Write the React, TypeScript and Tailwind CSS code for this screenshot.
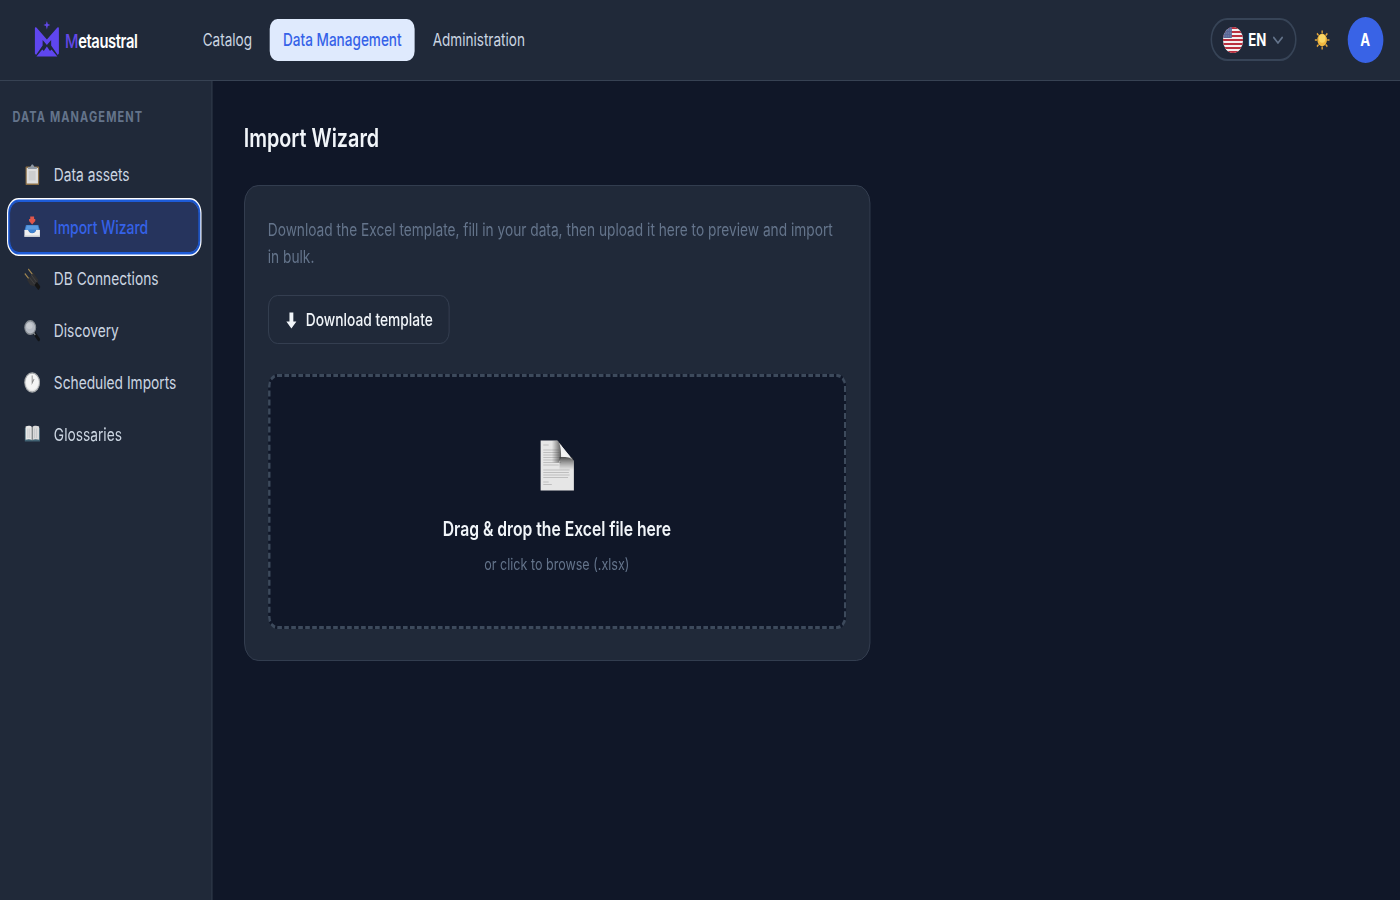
import React, { useState } from 'react';

interface NavItem {
  id: string;
  label: string;
  icon: React.ReactNode;
}

const topNav = ['Catalog', 'Data Management', 'Administration'];

const sideItems: NavItem[] = [
  {
    id: 'assets',
    label: 'Data assets',
    icon: (
      <svg width="21" height="22" viewBox="0 0 21 22">
        <rect x="2" y="2.5" width="17.5" height="18.500" rx="1" fill="#8d7047" />
        <rect x="3.5" y="4" width="14.5" height="15.500" fill="#dedede" />
        <rect x="6" y="7" width="9" height="9.500" fill="#cccdce" />
        <path d="M5 3h3l2-2.5h1.5l2 2.5h3v2H5z" fill="#8f98a3" />
      </svg>
    ),
  },
  {
    id: 'import',
    label: 'Import Wizard',
    icon: (
      <svg width="21" height="22" viewBox="0 0 21 22">
        <path d="M2.5 9h16l2 5.5H.5z" fill="#3b7cc9" />
        <path d="M3.5 9.5h14l1.5 4.5H2z" fill="#5b9be0" />
        <path d="M.5 14h5c1 4 9 4 10 0h5v6.500H.5z" fill="#efefef" />
        <path d="M.5 19.5h20V21H.5z" fill="#c9ccd0" />
        <path d="M5.500 13.500c1 5 9 5 10 0z" fill="#3f82cf" />
        <path d="M8 .5h5V3h1.500v2l-4 3.500-4-3.500V3H8z" fill="#e0564b" />
      </svg>
    ),
  },
  {
    id: 'db',
    label: 'DB Connections',
    icon: (
      <svg width="21" height="22" viewBox="0 0 21 22">
        <path d="M1 5.5l6 6M5.5 1l6 6" stroke="#a08650" strokeWidth="1.4" />
        <path d="M4 12l8-7 6 6.500-.500 5-3.500 2-6-1.500z" fill="#303032" />
        <path d="M7 9.500l7 7M9.500 7l6.500 7" stroke="#4a4a4a" strokeWidth=".8" />
        <path d="M15 15.500l5 5" stroke="#151515" strokeWidth="4.500" />
      </svg>
    ),
  },
  {
    id: 'discovery',
    label: 'Discovery',
    icon: (
      <svg width="21" height="22" viewBox="0 0 21 22">
        <path d="M13.5 13.500l5.500 6" stroke="#111418" strokeWidth="3.4" strokeLinecap="round" />
        <path d="M11.5 12l3 3" stroke="#83888e" strokeWidth="1.6" />
        <ellipse cx="8" cy="7.500" rx="7" ry="6.800" fill="#b5bac3" stroke="#858b91" strokeWidth="1.4" />
        <ellipse cx="7" cy="6" rx="4" ry="3" fill="#c6cad0" />
      </svg>
    ),
  },
  {
    id: 'scheduled',
    label: 'Scheduled Imports',
    icon: (
      <svg width="21" height="22" viewBox="0 0 21 22">
        <circle cx="10.5" cy="10.500" r="9.6" fill="#e4e4e4" stroke="#a4a7aa" strokeWidth="1.2" />
        <circle cx="10.5" cy="10" r="8" fill="#f4f4f4" />
        <path d="M10.5 3.5V11L13 7" fill="none" stroke="#8a8a8a" strokeWidth="1.2" />
      </svg>
    ),
  },
  {
    id: 'glossaries',
    label: 'Glossaries',
    icon: (
      <svg width="21" height="22" viewBox="0 0 21 22">
        <path d="M1 4h19.5v13.500H1z" fill="#416374" />
        <path d="M2 2.500c3-1 7-.8 8.200.5v13c-2-1-5.200-1-8.200-.3z" fill="#e8e8e8" />
        <path d="M19.500 2.500c-3-1-7.500-.8-8.700.5v13c2-1 5.700-1 8.700-.3z" fill="#dadada" />
        <path d="M5 4.500v9.500M7.500 4.500v9.500M13.500 4.500v9.500M16 4.500v9.500" stroke="#c2c4c6" strokeWidth=".9" />
        <path d="M10.500 3v13.500" stroke="#777" strokeWidth="1" />
      </svg>
    ),
  },
];

function Logo() {
  return (
    <div className="flex items-center">
      <svg width="33" height="37" viewBox="0 0 33 37" className="mb-[1px] shrink-0">
        <path d="M16.5 0l1.200 3 3.300 1-3.300 1-1.200 3.500L15.300 5 12 4l3.300-1z" fill="#6248e8" />
        <path d="M1 7.5Q1 5.500 3 6.500L16.500 18.500 30 6.500Q32 5.500 32 7.500V32.500L30.500 34 22 24.500V19L16.500 24 11 19V24.500L2.500 34 1 32.500z" fill="#5f46ee" />
        <path d="M3 35.500L10.500 28.500 12.500 30 16.500 25.500 20.500 30 22.500 28.500 30 35.500z" fill="#5f46ee" />
      </svg>
      <span className="mt-[4px] ml-[7px] text-[19px] font-semibold tracking-[-0.5px] text-white">
        <span className="font-medium text-[#6248e8]">M</span>etaustral
      </span>
    </div>
  );
}

function Flag() {
  return (
    <svg width="26" height="26" viewBox="0 0 26 26" preserveAspectRatio="none">
      <clipPath id="flag-clip">
        <circle cx="13" cy="13" r="13" />
      </clipPath>
      <g clipPath="url(#flag-clip)">
        <rect width="26" height="26" fill="#f4f0f1" />
        <path d="M0 1h26M0 5h26M0 9h26M0 13h26M0 17h26M0 21h26M0 25h26" stroke="#b9303f" strokeWidth="2" />
        <rect width="11.5" height="11" fill="#5a6796" />
        <path d="M2 3h9M2 6h9M2 9h9" stroke="#a4abc6" strokeWidth=".8" strokeDasharray="1 1.5" />
      </g>
    </svg>
  );
}

function Sun() {
  return (
    <svg width="20" height="20" viewBox="0 0 20 20">
      <path
        d="M10 .5v3M10 16.5v3M.5 10h3M16.5 10h3M3.3 3.3l2 2M14.7 14.7l2 2M3.3 16.7l2-2M14.7 5.3l2-2"
        stroke="#e5a73c"
        strokeWidth="1.7"
      />
      <circle cx="10" cy="10" r="6.2" fill="#f1b840" />
      <circle cx="10" cy="8.5" r="4.2" fill="#fad765" />
    </svg>
  );
}

function PageIcon() {
  return (
    <svg width="44" height="51" viewBox="0 0 44 51">
      <defs>
        <linearGradient id="fold" x1="0" y1="1" x2="1" y2="0">
          <stop offset="0" stopColor="#c9c9c9" />
          <stop offset=".35" stopColor="#f5f5f5" />
          <stop offset="1" stopColor="#dadada" />
        </linearGradient>
        <linearGradient id="shade-x" x1="0" x2="1" y1="0" y2="0">
          <stop offset="0" stopColor="#555" stopOpacity="0" />
          <stop offset="1" stopColor="#444" stopOpacity=".85" />
        </linearGradient>
        <linearGradient id="shade-y" x1="0" x2="0" y1="0" y2="1">
          <stop offset="0" stopColor="#3c3c3c" stopOpacity=".9" />
          <stop offset="1" stopColor="#777" stopOpacity="0" />
        </linearGradient>
      </defs>
      <path d="M.5.5H22L43.500 21V50.500H.5z" fill="#e6e6e6" />
      <path
        d="M4 5h7M4 10h20M4 12.5h21M4 15h21M4 17.5h23M4 20h21M4 22.5h23M4 25h20M4 30h34M4 32.5h33M4 35h34M4 37.5h32M4 42h7M4 44.5h11"
        stroke="#b4b4b4"
        strokeWidth=".9"
      />
      <path d="M15 .5h7l5 4v13l-3 5h-9z" fill="url(#shade-x)" />
      <path d="M25 17h16l2.500 4v9H25z" fill="url(#shade-y)" />
      <path d="M22 .5C26 3 27 9 27 17c7 0 13 0 16.500 4.500z" fill="url(#fold)" />
    </svg>
  );
}

function Header() {
  return (
    <header className="flex h-[81px] shrink-0 items-center border-b border-[#374253] bg-[#202939] pr-[22px] pl-[44px]">
      <div className="w-[200.500px]">
        <Logo />
      </div>
      <nav className="flex items-center gap-[6px]">
        {topNav.map((label) => (
          <button
            key={label}
            className={`h-[42px] rounded-[10px] px-[17px] pt-[1px] text-[17.5px] whitespace-nowrap ${
              label === 'Data Management' ? 'bg-[#dfeafd] font-medium text-[#3562e8]' : 'text-[#cbd5e1]'
            }`}
          >
            {label}
          </button>
        ))}
      </nav>
      <div className="ml-auto flex items-center">
        <button className="mb-[1px] flex h-[43px] w-[111px] items-center rounded-[22px] border-2 border-[#374457] pl-[14px]">
          <Flag />
          <span className="mt-[3px] ml-[7px] text-[17px] font-bold text-white">EN</span>
          <svg width="14" height="8" viewBox="0 0 14 8" fill="none" stroke="#64748b" strokeWidth="1.8" className="ml-[8px]">
            <path d="M1 1l6 6 6-6" />
          </svg>
        </button>
        <span className="mx-[23px]">
          <Sun />
        </span>
        <div className="flex size-[46px] items-center justify-center rounded-full bg-[#3963e6] pt-[1px] text-[17px] font-bold text-white">A</div>
      </div>
    </header>
  );
}

function Sidebar({ active, onNavigate }: { active: string; onNavigate: (id: string) => void }) {
  return (
    <aside className="w-[273.500px] shrink-0 border-r border-[#374253] bg-[#202939] pt-[26px] pr-[15.5px] pl-[12px]">
      <h2 className="pl-[4px] text-[14.2px] leading-[20px] font-bold tracking-[1.45px] text-[#64748b]">DATA MANAGEMENT</h2>
      <div className="mt-[21.500px] flex flex-col">
        {sideItems.map((item) => (
          <button
            key={item.id}
            onClick={() => onNavigate(item.id)}
            className={`flex h-[52px] w-full items-center rounded-[12px] pl-[19px] text-left ${
              item.id === active
                ? 'bg-[#26345d] text-[18px] font-medium text-[#3562e8] shadow-[inset_0_0_0_1px_#1d5bd8,0_0_0_1.5px_#1d5bd8,0_0_0_3px_#ffffff]'
                : 'text-[17.75px] text-[#cbd5e1]'
            }`}
          >
            {item.icon}
            <span className="mt-[1px] ml-[17.5px] whitespace-nowrap">{item.label}</span>
          </button>
        ))}
      </div>
    </aside>
  );
}

export default function App() {
  const [active, setActive] = useState('import');

  return (
    <div className="h-[900px] w-[1400px] overflow-hidden bg-[#101728]">
      {/* Condensed interface: everything is drawn wide and narrowed on x */}
      <div className="flex h-[900px] w-[1806.5px] origin-top-left scale-x-[0.775] flex-col font-['Inter',sans-serif]">
        <Header />
        <div className="flex min-h-0 flex-1">
          <Sidebar active={active} onNavigate={setActive} />
          <main className="flex-1 pt-[40px] pl-[41px]">
            <h1 className="text-[25.5px] leading-[34px] font-semibold text-[#f1f5f9]">Import Wizard</h1>
            <section className="mt-[30px] h-[476px] w-[808px] rounded-[18px] border border-[#374253] bg-[#202939] px-[30px] pt-[30px]">
              <p className="text-[17.7px] leading-[27px] text-[#64748b]">
                Download the Excel template, fill in your data, then upload it here to preview and import in bulk.
              </p>
              <button className="mt-[25px] flex h-[49px] w-[234px] items-center rounded-[12px] border border-[#374253] pt-[1px] pl-[22px] text-[17.8px] font-medium text-[#f1f5f9]">
                <svg width="14" height="17" viewBox="0 0 14 17" fill="currentColor">
                  <path d="M4.5.5h5v9H13.5L7 16.5.5 9.5h4z" />
                </svg>
                <span className="ml-[12px] whitespace-nowrap">Download template</span>
              </button>
              <div className="mt-[30px] flex h-[255px] flex-col items-center rounded-[12px] border-[3px] border-dashed border-[#3d4a5c] bg-[#101728] pt-[63px]">
                <PageIcon />
                <p className="mt-[23px] text-[20.25px] leading-[30px] font-semibold text-[#f1f5f9]">Drag &amp; drop the Excel file here</p>
                <p className="mt-[8px] text-[16.2px] leading-[24px] text-[#64748b]">or click to browse (.xlsx)</p>
              </div>
            </section>
          </main>
        </div>
      </div>
    </div>
  );
}
